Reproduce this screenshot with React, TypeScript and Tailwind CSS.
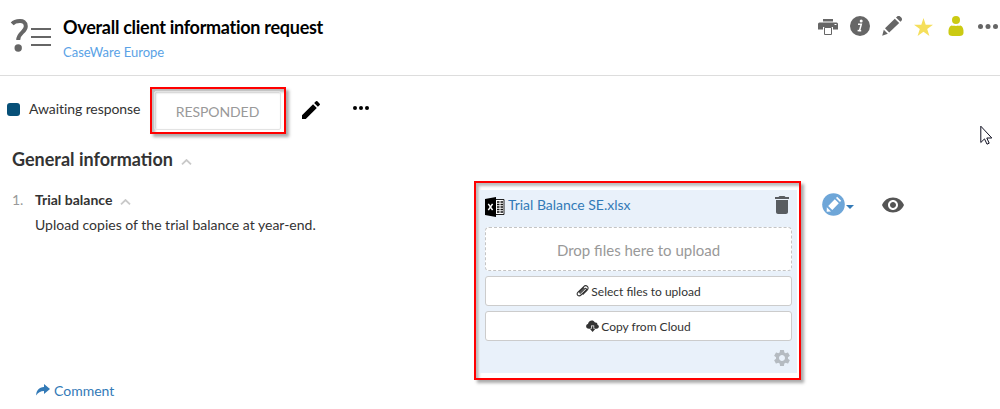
import React from "react";
import { MdDelete, MdEdit, MdSettings, MdVisibility } from "react-icons/md";

function RequestIcon() {
  return (
    <svg className="mt-[18px] ml-[10px] block h-[34px] w-[42px] shrink-0" viewBox="0 0 42 34">
      <path d="M2.2 5.8C4.4 3.4 15.8.2 15.8 8.2c0 6.3-7.6 6.2-7.6 13.8" fill="none" stroke="#666" strokeWidth="4" />
      <circle cx="8.2" cy="30" r="3.7" fill="#666" />
      <path d="M21 10h20v2H21zM21 18h20v2H21zM21 26h20v2H21z" fill="#666" />
    </svg>
  );
}

function PrinterIcon() {
  return (
    <svg className="block h-[18px] w-5" viewBox="0 0 20 18">
      <path d="M5 1h10v2.5H5z" fill="#666" />
      <path d="M1.5 4.5h17A1.5 1.5 0 0 1 20 6v5.5h-5V9H5v2.5H0V6a1.5 1.5 0 0 1 1.500-1.500z" fill="#666" />
      <path d="M16.500 6h2v1h-2z" fill="#fff" />
      <path d="M6.500 9.500h7v7h-7z" fill="#fff" stroke="#666" />
    </svg>
  );
}

function InfoIcon() {
  return (
    <svg className="block h-5 w-5" viewBox="0 0 20 20">
      <circle cx="10" cy="10" r="10" fill="#666" />
      <circle cx="11.200" cy="5" r="1.500" fill="#fff" />
      <path d="M8 8.300h3.300L9.500 14.700h1.700M7.600 14.500l1.900.3" fill="none" stroke="#fff" strokeWidth="1.500" />
    </svg>
  );
}

function PencilIcon() {
  return (
    <svg className="block h-5 w-5" viewBox="0 0 20 20">
      <path d="M.2 19.800 1.800 13.800 5.800 17.800zM3 12.300 12.800 2.700 17.200 7 7.200 16.600zM14 1.600l.9-.9a2.500 2.500 0 0 1 3.500 0l.9.9a2.500 2.500 0 0 1 0 3.300l-.9.9z" fill="#666" />
    </svg>
  );
}

function StarIcon() {
  return (
    <svg className="block h-[18px] w-[19px]" viewBox="0 0 19 18">
      <path d="M9.500 0l2.200 6.800H19l-5.800 4.300 2.200 6.900-5.900-4.200L3.600 18l2.200-6.900L0 6.800h7.300z" fill="#f5df5b" />
    </svg>
  );
}

function PersonIcon() {
  return (
    <svg className="block h-5 w-4" viewBox="0 0 16 20">
      <circle cx="8" cy="4" r="4" fill="#cbca12" />
      <path d="M3.500 9.500C5.500 10 10.500 10 12.500 9.500 15 10.500 15.700 13 15.500 17c-.1 2-1.500 3-4 3h-7c-2.500 0-4-1-4-3C.3 13 1 10.500 3.500 9.500z" fill="#cbca12" />
    </svg>
  );
}

function Dots({ className, fill }: { className: string; fill: string }) {
  return (
    <svg className={className} viewBox="0 0 20 5">
      <circle cx="2.500" cy="2.500" r="2.500" fill={fill} />
      <circle cx="10" cy="2.500" r="2.500" fill={fill} />
      <circle cx="17.500" cy="2.500" r="2.500" fill={fill} />
    </svg>
  );
}

function Caret() {
  return (
    <svg className="block h-[6px] w-[11px]" viewBox="0 0 11 6">
      <path d="M1 5.300 5.500 1 10 5.300" fill="none" stroke="#c9c9c9" strokeWidth="1.800" />
    </svg>
  );
}

function SheetIcon() {
  return (
    <svg className="mt-[7px] block h-5 w-5 shrink-0" viewBox="0 0 20 20">
      <path d="M0 2 11 0v20L0 18z" fill="#000" />
      <path d="M11 2.500h8v15h-8" fill="#fff" stroke="#222" />
      <path d="M12 5h2.500M12 7.500h2.500M12 10h2.500M12 12.500h2.500M12 15h2.500M15.500 5H18M15.500 7.500H18M15.500 10H18M15.500 12.500H18M15.500 15H18" stroke="#111" strokeWidth="1.400" />
      <path d="M3.300 6.800 7.600 13.200M7.600 6.800 3.300 13.200" stroke="#fff" strokeWidth="1.500" />
    </svg>
  );
}

function ClipIcon() {
  return (
    <svg className="block h-3 w-[13px]" viewBox="0 0 13 12">
      <path d="M3.800 8.600 8.600 3.800c1.200-1.200 2.600.1 1.400 1.300L5 10c-2.200 2.200-5.200-.4-3.200-2.600L7.500 1.800c2.800-2.700 6.300.6 3.700 3.300L6.700 9.600M2.900 7.500 8 2.600" fill="none" stroke="#333" strokeWidth="1.100" />
    </svg>
  );
}

function CloudIcon() {
  return (
    <svg className="block h-3 w-[13px]" viewBox="0 0 13 12">
      <path d="M3 8.800C-.5 8.800-.8 4.600 2 4.100 2.200.4 7.200-1.200 9 2.500c2-.4 2.500.8 2.300 1.900C13.700 5.300 13.300 8.800 10.500 8.800H9L8.200 8V5.500H5V8l-.8.800z" fill="#333" />
      <path d="M5.700 6.300h1.800v2.500h1.900L6.600 12 3.800 8.800h1.900z" fill="#333" />
    </svg>
  );
}

function Header() {
  return (
    <header className="flex h-[76px] border-b border-[#ddd]">
      <RequestIcon />
      <div className="ml-[11px] pt-[15px]">
        <h1 className="h-6 w-[269px] text-[18px] leading-6 font-bold tracking-[-0.28px] text-black">Overall client information request</h1>
        <div className="mt-[3px] text-[13px] leading-5 text-[#5aa2e6]">CaseWare Europe</div>
      </div>
      <div className="ml-auto flex h-5 shrink-0 translate-y-4 items-center">
        <span className="mr-3 pt-[2px]"><PrinterIcon /></span>
        <span className="mr-3"><InfoIcon /></span>
        <span className="mr-3"><PencilIcon /></span>
        <span className="mr-[15px] pt-[2px]"><StarIcon /></span>
        <span className="mr-[14px]"><PersonIcon /></span>
        <Dots className="mr-[2px] block h-[5px] w-5" fill="#666" />
      </div>
    </header>
  );
}

function StatusBar() {
  return (
    <div className="flex h-[62px] pt-[11px]">
      <span className="mt-4 ml-[7px] h-[13px] w-[13px] rounded-[3px] bg-[#075078]" />
      <span className="mt-3 ml-[9px] w-[121px] text-[14px] leading-5 tracking-[-0.08px] whitespace-nowrap">Awaiting response</span>
      <div className="h-[47px] w-[136px] border-2 border-[#f00] p-[2px] pr-[3px] shadow-[3px_3px_3px_#aaa,inset_3px_3px_3px_#bbb]">
        <button className="h-[39px] w-full rounded-[2px] border border-[#e3e3e3] bg-white pt-[2px] text-[14px] leading-5 tracking-[-0.08px] text-[#999] shadow-[inset_1px_1px_2px_#ccc]">RESPONDED</button>
      </div>
      <MdEdit className="mt-[11px] ml-[13px] h-6 w-6 text-black" />
      <Dots className="mt-[19px] ml-[30px] h-[4px] w-4" fill="#000" />
    </div>
  );
}

function UploadPanel() {
  return (
    <section className="h-[199px] w-[327px] border-2 border-[#f00] pt-[7px] pr-[2px] pl-1 shadow-[3px_3px_3px_#aaa,inset_3px_3px_3px_#bbb]">
      <div className="h-[183px] bg-[#e9f1fa] px-[5px]">
        <div className="flex h-[37px]">
          <SheetIcon />
          <a className="mt-[5px] ml-[3px] text-[14px] leading-5 tracking-[-0.02px] whitespace-nowrap text-[#337ab7]">Trial Balance SE.xlsx</a>
          <MdDelete className="mt-[3px] -mr-[2px] ml-auto h-6 w-6 text-[#595d61]" />
        </div>
        <div className="h-11 rounded-[4px] border border-dashed border-[#c4c4c4] bg-white text-center text-[15px] leading-[44px] text-[#999]">Drop files here to upload</div>
        <button className="mt-[5px] flex h-[30px] w-full items-center justify-center gap-[2px] rounded-[3px] border border-[#ccc] bg-white text-[12px]"><ClipIcon /><span className="pt-px">Select files to upload</span></button>
        <button className="mt-[5px] flex h-[30px] w-full items-center justify-center gap-[2px] rounded-[3px] border border-[#ccc] bg-white text-[12px]"><CloudIcon /><span className="pt-px">Copy from Cloud</span></button>
        <div className="flex justify-end pt-[7px]"><MdSettings className="h-5 w-5 text-[#b5bbc1]" /></div>
      </div>
    </section>
  );
}

export default function App() {
  return (
    <main className="relative h-[409px] w-[1000px] overflow-hidden bg-white font-['Lato',sans-serif] text-[#333]">
      <Header />
      <StatusBar />
      <div className="flex h-[43px] items-start pt-[9px] pl-3">
        <h2 className="text-[18px] leading-6 font-bold whitespace-nowrap">General information</h2>
        <span className="mt-3 ml-2"><Caret /></span>
      </div>
      <div className="flex h-[199px]">
        <div className="flex w-[474px] shrink-0 pt-[9px] text-[14px]">
          <span className="ml-3 w-[23px] leading-5 text-[#999]">1.</span>
          <div>
            <div className="flex h-[25px] leading-5"><strong>Trial balance</strong><span className="mt-[9px] ml-2"><Caret /></span></div>
            <p className="leading-5 whitespace-nowrap">Upload copies of the trial balance at year-end.</p>
          </div>
        </div>
        <UploadPanel />
        <div className="flex pt-3 pl-[21px]">
          <svg className="h-[23px] w-[33px]" viewBox="0 0 33 23">
            <circle cx="11.500" cy="11.500" r="11.300" fill="#6ea6d8" />
            <path d="M6.200 13 12.800 6.300 16.800 10.300 10.300 17zM14 5l1.200-1.200 4 4-1.200 1.200zM4.800 14.300 9 18.400 4.700 18.800z" fill="#fff" />
            <path d="M24 12h8l-4 4z" fill="#337ab7" />
          </svg>
          <MdVisibility className="ml-[26px] h-6 w-6 text-[#555]" />
        </div>
      </div>
      <div className="flex pt-px pl-9 text-[14px] leading-5 text-[#337ab7]">
        <svg className="mt-[3px] mr-1 h-[12px] w-[14px]" viewBox="0 0 14 12">
          <path d="M8 0l6 5-6 5V7C4.500 7 2 8.500.2 11.500.2 6.500 3 3.400 8 3z" fill="#337ab7" />
        </svg>
        <span>Comment</span>
      </div>
      <svg className="absolute top-[125px] left-[980px] h-[21px] w-[13px]" viewBox="0 0 13 21">
        <path d="M.8 1.200v16.300l3.700-3.600 2.500 5.300 2.200-1-2.400-5.200h5z" fill="#fff" stroke="#112" />
      </svg>
    </main>
  );
}
